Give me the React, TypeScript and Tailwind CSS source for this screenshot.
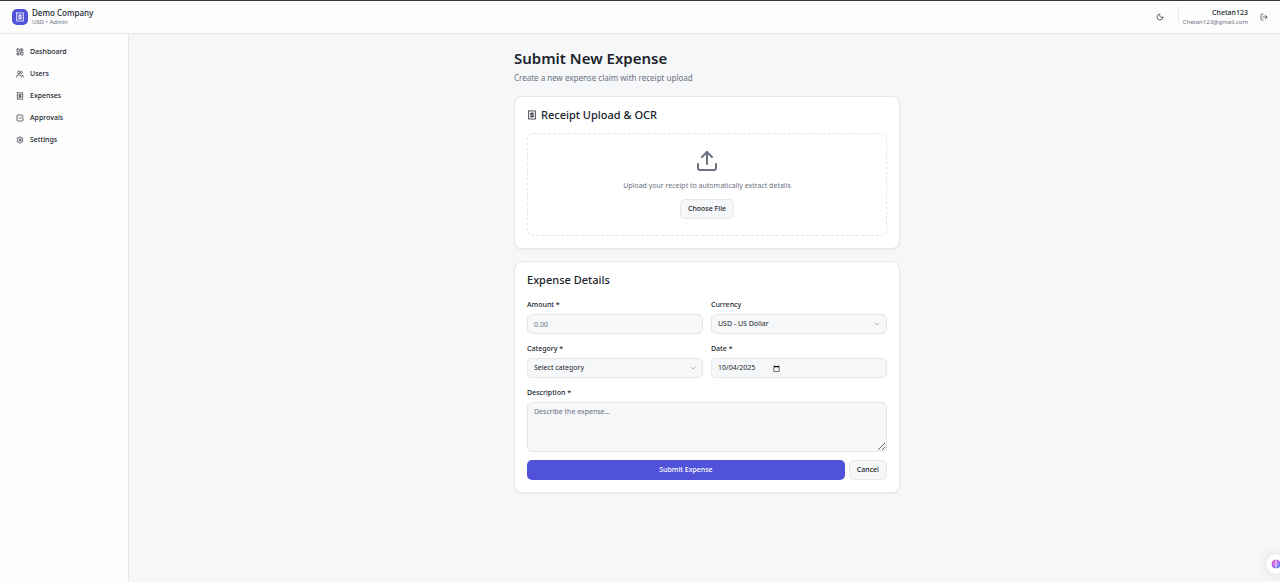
import type { ReactNode } from "react";
import {
  ChevronDown,
  LayoutDashboard,
  LogOut,
  Moon,
  Settings,
  SquareCheckBig,
  Upload,
  Users,
} from "lucide-react";

function ReceiptIcon({ className }: { className?: string }) {
  return (
    <svg
      viewBox="0 0 24 24"
      fill="none"
      stroke="currentColor"
      strokeWidth="2"
      strokeLinecap="round"
      strokeLinejoin="round"
      className={className}
      aria-hidden="true"
    >
      <path d="M4 2v20l2-.5 2 .5 2-.5 2 .5 2-.5 2 .5 2-.5 2 .5V2l-2 .5-2-.5-2 .5-2-.5-2 .5-2-.5-2 .5Z" />
      <path d="M16 8h-6a2 2 0 1 0 0 4h4a2 2 0 1 1 0 4H8" />
      <path d="M12 17.5v-11" />
    </svg>
  );
}

function BrainIcon({ className }: { className?: string }) {
  return (
    <svg viewBox="0 0 24 24" className={className} aria-hidden="true">
      <defs>
        <linearGradient id="brain-fill" x1="0" y1="0" x2="1" y2="1">
          <stop offset="0" stopColor="#f4509d" />
          <stop offset="0.5" stopColor="#a855f7" />
          <stop offset="1" stopColor="#3b82f6" />
        </linearGradient>
      </defs>
      <path
        fill="url(#brain-fill)"
        d="M11 2.5C8.5.8 5.5 2.2 5.3 5 2.8 5.4 1.4 8.2 2.6 10.4.6 12 .8 15.2 2.8 16.5 2.5 19.3 5 21 7 20.8 8.3 22.8 10 22.5 11 21.5ZM13 2.5C15.5.8 18.5 2.2 18.7 5 21.2 5.4 22.6 8.2 21.4 10.4 23.4 12 23.2 15.2 21.2 16.5 21.5 19.3 19 21 17 20.8 15.7 22.8 14 22.5 13 21.5Z"
      />
      <path
        fill="none"
        stroke="white"
        strokeWidth="1.2"
        strokeLinecap="round"
        d="M11 8H8.5L7 6.5M11 16H8.5L7 17.5M5 12h4M13 8h2.5L17 6.5M13 16h2.5L17 17.5M19 12h-4"
      />
    </svg>
  );
}

const navItems = [
  { label: "Dashboard", Icon: LayoutDashboard },
  { label: "Users", Icon: Users },
  { label: "Expenses", Icon: ReceiptIcon },
  { label: "Approvals", Icon: SquareCheckBig },
  { label: "Settings", Icon: Settings },
];

const fieldClass =
  "h-5 w-full rounded-[5px] border border-[#e2e5ea] bg-[#f5f7f9] px-1.5 text-[7px] leading-[10px] text-[#20242c] placeholder:text-[#6b7280] outline-none focus:border-[#5052d9]";

const dateClass =
  "flex [&::-webkit-calendar-picker-indicator]:-ms-1 [&::-webkit-datetime-edit-day-field]:p-0 [&::-webkit-datetime-edit-month-field]:p-0 [&::-webkit-datetime-edit-year-field]:p-0";

function Field({ id, label, children }: { id: string; label: string; children: ReactNode }) {
  return (
    <div className="flex flex-col gap-1">
      <label htmlFor={id} className="text-[7px] leading-[10px] font-medium">
        {label}
      </label>
      {children}
    </div>
  );
}

function SelectField({ id, label, value }: { id: string; label: string; value: string }) {
  return (
    <Field id={id} label={label}>
      <div className="relative">
        <select id={id} className={`${fieldClass} block appearance-none`}>
          <option>{value}</option>
        </select>
        <ChevronDown className="pointer-events-none absolute top-1.5 right-1.5 size-2 text-[#8b919b]" />
      </div>
    </Field>
  );
}

export default function App() {
  return (
    <div className="flex min-h-screen flex-col overflow-x-hidden bg-[#f5f7f9] font-['Noto_Sans','Open_Sans',sans-serif] text-[#20242c]">
      <header className="flex h-[34px] items-center justify-between border-t border-b border-t-[#37343a] border-b-[#e5e7eb] bg-[#fdfdfe] px-3">
        <div className="flex items-center gap-1">
          <div className="flex size-4 items-center justify-center rounded-[5px] bg-[#5052d9] text-white">
            <ReceiptIcon className="size-2.5" />
          </div>
          <div>
            <p className="text-[8px] leading-[10px] font-medium">Demo Company</p>
            <p className="text-[6px] leading-2 text-[#6b7280]">USD • Admin</p>
          </div>
        </div>
        <div className="flex items-center">
          <button type="button" aria-label="Toggle theme" className="mr-3.5">
            <Moon className="size-2" />
          </button>
          <div className="flex h-5 flex-col items-end justify-center border-l border-[#eceef1] pl-1">
            <p className="text-[7px] leading-[10px] font-medium">Chetan123</p>
            <p className="text-[6px] leading-2 text-[#6b7280]">Chetan123@gmail.com</p>
          </div>
          <button type="button" aria-label="Log out" className="ml-3">
            <LogOut className="size-2" />
          </button>
        </div>
      </header>

      <div className="flex flex-1">
        <aside className="w-[129px] shrink-0 border-r border-[#e2e5ea] bg-[#fdfdfe] px-2 py-2">
          <nav className="flex flex-col gap-0.5">
            {navItems.map(({ label, Icon }) => (
              <a
                key={label}
                href="#"
                className="flex h-5 items-center gap-1.5 rounded-[5px] px-2 text-[7px] leading-[10px] font-medium"
              >
                <Icon className="size-2" />
                {label}
              </a>
            ))}
          </nav>
        </aside>

        <main className="flex-1 pt-4 pr-3 pb-4 pl-[17px]">
          <div className="mx-auto max-w-[386px]">
            <h1 className="text-[15px] leading-4 font-semibold">Submit New Expense</h1>
            <p className="mt-1.5 text-[8px] leading-3 text-[#6b7280]">
              Create a new expense claim with receipt upload
            </p>

            <section className="mt-3 rounded-lg border border-[#e5e7eb] bg-white p-3 shadow-xs">
              <h2 className="flex h-3 items-center gap-1 text-[11px] leading-3 font-medium">
                <ReceiptIcon className="size-2.5" />
                Receipt Upload &amp; OCR
              </h2>
              <div className="mt-3 flex flex-col items-center rounded-md border border-dashed border-[#e2e5ea] px-3 pt-[15px] pb-4">
                <Upload className="size-6 text-[#6b7280]" />
                <p className="mt-2 text-[7px] leading-[10px] text-[#6b7280]">
                  Upload your receipt to automatically extract details
                </p>
                <button
                  type="button"
                  className="mt-2 h-5 rounded-[5px] border border-[#e5e7eb] bg-[#f5f7f9] px-[7px] text-[7px] leading-[10px] font-medium"
                >
                  Choose File
                </button>
              </div>
            </section>

            <section className="mt-3 rounded-lg border border-[#e5e7eb] bg-white p-3 shadow-xs">
              <h2 className="h-3 text-[11px] leading-3 font-medium">Expense Details</h2>
              <form className="mt-3.5" onSubmit={(event) => event.preventDefault()}>
                <div className="grid grid-cols-2 gap-x-2 gap-y-2.5">
                  <Field id="amount" label="Amount *">
                    <input id="amount" inputMode="decimal" placeholder="0.00" className={fieldClass} />
                  </Field>
                  <SelectField id="currency" label="Currency" value="USD - US Dollar" />
                  <SelectField id="category" label="Category *" value="Select category" />
                  <Field id="date" label="Date *">
                    <input id="date" type="date" defaultValue="2025-10-04" className={`${fieldClass} ${dateClass}`} />
                  </Field>
                </div>
                <div className="mt-2.5">
                  <Field id="description" label="Description *">
                    <textarea
                      id="description"
                      placeholder="Describe the expense..."
                      className="block h-[50px] w-full resize-y rounded-[5px] border border-[#e2e5ea] bg-[#f5f7f9] px-1.5 py-1 text-[7px] leading-[10px] outline-none placeholder:text-[#6b7280] focus:border-[#5052d9]"
                    />
                  </Field>
                </div>
                <div className="mt-2 flex gap-1">
                  <button
                    type="submit"
                    className="h-5 flex-1 rounded-[5px] bg-[#5052d9] text-[7px] leading-[10px] font-medium text-white"
                  >
                    Submit Expense
                  </button>
                  <button
                    type="button"
                    className="h-5 rounded-[5px] border border-[#e5e7eb] bg-[#f5f7f9] px-[7px] text-[7px] leading-[10px] font-medium"
                  >
                    Cancel
                  </button>
                </div>
              </form>
            </section>
          </div>
        </main>
      </div>

      <button
        type="button"
        aria-label="Open assistant"
        className="fixed -right-1.5 bottom-2 flex size-5 items-center justify-center rounded-full bg-white shadow-[0_0_12px_rgba(0,0,0,0.12)]"
      >
        <BrainIcon className="size-2.5" />
      </button>
    </div>
  );
}
